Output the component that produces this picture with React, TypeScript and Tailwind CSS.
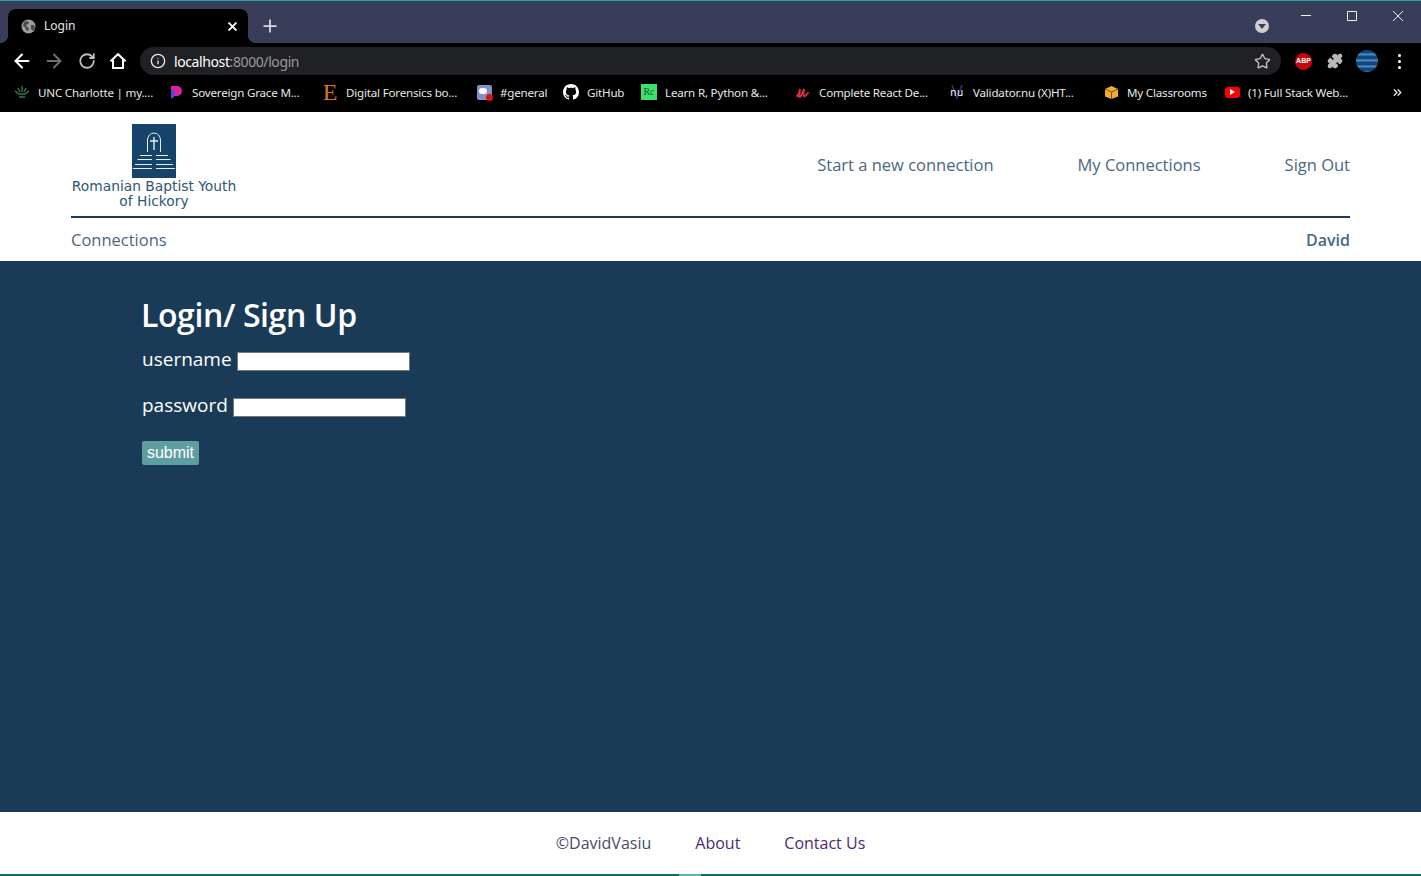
import React from "react";
import { ArrowLeft, ArrowRight, RotateCw, Info, Star, Puzzle, Plus, ChevronsRight } from "lucide-react";

const Bm = ({ icon, label, w }: { icon: React.ReactNode; label: string; w: number }) => (
  <div className="flex items-center shrink-0" style={{ width: w }}>
    <span className="w-4 h-4 flex items-center justify-center shrink-0">{icon}</span>
    <span className="ml-2 text-[11.6px] text-[#e8e8e8] whitespace-nowrap tracking-[-0.2px]">{label}</span>
  </div>
);

export default function App() {
  return (
    <div className="w-[1421px] h-[876px] flex flex-col overflow-hidden bg-white font-['Open_Sans',sans-serif]">
      {/* Tab strip */}
      <div className="h-[43px] shrink-0 bg-[#383d59] border-t border-[#2aa5a8] flex items-end relative pl-2">
        <div className="w-[240px] h-[34px] bg-black rounded-t-lg flex items-center pl-[13px] pr-[11px] relative">
          <span className="absolute left-[-8px] bottom-0 w-2 h-2 bg-[radial-gradient(circle_at_0_0,#383d59_8px,#000_8px)]" />
          <span className="absolute right-[-8px] bottom-0 w-2 h-2 bg-[radial-gradient(circle_at_100%_0,#383d59_8px,#000_8px)]" />
          <svg width="15" height="15" viewBox="0 0 15 15">
            <circle cx="7.5" cy="7.5" r="7" fill="#9c9c9c" />
            <path d="M3 3c2-1 4-1 5 0l-1 2-2 1 1 2 2 1-1 3-2-1-1-3-2-1zM10 6l3 0 1 3-2 3-2-2z" fill="#4a4a4a" />
          </svg>
          <span className="ml-2 text-[12px] text-[#e8e8e8] font-['Noto_Sans',sans-serif]">Login</span>
          <svg width="9" height="9" viewBox="0 0 9 9" stroke="#fff" strokeWidth="1.8" className="ml-auto">
            <path d="M.5.5l8 8M8.5.5l-8 8" />
          </svg>
        </div>
        <Plus size={20} strokeWidth={2.1} className="ml-[12px] mb-[7px] text-[#dcdcdc]" />
        <div className="absolute left-[1255px] top-[18px] w-[14px] h-[14px] rounded-full bg-[#cfcfcf] flex items-center justify-center">
          <div className="w-0 h-0 border-l-[4px] border-r-[4px] border-t-[5px] border-l-transparent border-r-transparent border-t-[#383d59]" />
        </div>
        <div className="absolute right-0 top-0 flex">
          <div className="w-[46px] h-[29px] flex items-center justify-center">
            <svg width="10" height="10" viewBox="0 0 10 10" stroke="#f0f0f0" strokeWidth="1"><path d="M0 4.5h10" /></svg>
          </div>
          <div className="w-[46px] h-[29px] flex items-center justify-center">
            <svg width="10" height="10" viewBox="0 0 10 10" stroke="#f0f0f0" strokeWidth="1" fill="none"><path d="M.5.5h9v9h-9z" /></svg>
          </div>
          <div className="w-[46px] h-[29px] flex items-center justify-center">
            <svg width="10" height="10" viewBox="0 0 10 10" stroke="#f0f0f0" strokeWidth="1"><path d="M0 0l10 10M10 0L0 10" /></svg>
          </div>
        </div>
      </div>
      {/* Toolbar */}
      <div className="h-[37px] shrink-0 bg-black flex items-center pl-[11px] pb-[1px]">
        <ArrowLeft size={22} strokeWidth={2.2} className="text-white shrink-0" />
        <ArrowRight size={22} strokeWidth={2.2} className="ml-[10px] text-[#6f6f6f] shrink-0" />
        <RotateCw size={18} strokeWidth={2.4} className="ml-[13px] text-[#bdbdbd] shrink-0" />
        <svg width="18" height="18" viewBox="0 0 18 18" fill="none" stroke="#fff" strokeWidth="2" className="ml-[13px] shrink-0">
          <path d="M1.5 9.2 9 2.2l7.5 7M4 7.5V16h10V7.5" />
        </svg>
        <div className="ml-[13px] h-[28px] w-[1141px] shrink-0 rounded-full bg-[#202124] flex items-center pl-[10px] pr-[10px]">
          <Info size={16} strokeWidth={2} className="text-[#e8e8e8]" />
          <span className="ml-[8px] text-[14px] text-white tracking-[-0.4px] font-['Noto_Sans',sans-serif]">localhost<span className="text-[#9a9a9a]">:8000/login</span></span>
          <Star size={17} strokeWidth={1.8} className="ml-auto text-[#c8c8c8]" />
        </div>
        <div className="ml-[14px] w-[17px] h-[17px] shrink-0 rounded-full bg-[#c8040e] text-white text-[7px] font-bold flex items-center justify-center font-['Liberation_Sans',sans-serif]">ABP</div>
        <Puzzle size={16} fill="#b8b8b8" className="ml-[15px] text-[#b8b8b8] shrink-0" />
        <div className="ml-[13px] w-[22px] h-[22px] shrink-0 rounded-full bg-[repeating-linear-gradient(180deg,#12457c_0,#12457c_3px,#5a9ac8_4px,#1b5a94_6px)]" />
        <div className="ml-[20px] flex flex-col gap-[3px] shrink-0">
          <span className="w-[3px] h-[3px] rounded-full bg-white" />
          <span className="w-[3px] h-[3px] rounded-full bg-white" />
          <span className="w-[3px] h-[3px] rounded-full bg-white" />
        </div>
      </div>
      {/* Bookmarks */}
      <div className="h-[32px] shrink-0 bg-black flex items-center pl-[14px] pb-[7px] font-['Noto_Sans',sans-serif]">
        <Bm w={154} label="UNC Charlotte | my...." icon={<svg width="16" height="14" viewBox="0 0 16 14" fill="none" stroke="#2e7d43" strokeWidth="1.4"><path d="M8 1v6M4 3l2 4M12 3l-2 4M1 6l4 3h6l4-3M5 12h6" /></svg>} />
        <Bm w={154} label="Sovereign Grace M..." icon={<svg width="14" height="15" viewBox="0 0 14 15"><path d="M2 1h6a5 5 0 0 1 0 10H6l-4 3z" fill="#d6249f" /><path d="M2 5h3v6l-3 3z" fill="#3b4cf0" /></svg>} />
        <Bm w={154} label="Digital Forensics bo..." icon={<span className="text-[24px] leading-none text-[#d9741f] font-['Liberation_Serif',serif]">E</span>} />
        <Bm w={87} label="#general" icon={<span className="relative block w-[15px] h-[15px] rounded-[2px] bg-[#7f93c9]"><span className="absolute left-[2px] top-[3px] w-[8px] h-[6px] rounded-full bg-white" /><span className="absolute right-[-1px] bottom-[-1px] w-[7px] h-[7px] rounded-full bg-[#e0101a]" /></span>} />
        <Bm w={78} label="GitHub" icon={<svg width="16" height="16" viewBox="0 0 16 16" fill="#fff"><path d="M8 0C3.58 0 0 3.58 0 8c0 3.54 2.29 6.53 5.47 7.59.4.07.55-.17.55-.38 0-.19-.01-.82-.01-1.49-2.01.37-2.53-.49-2.69-.94-.09-.23-.48-.94-.82-1.13-.28-.15-.68-.52-.01-.53.63-.01 1.08.58 1.23.82.72 1.21 1.87.87 2.33.66.07-.52.28-.87.51-1.07-1.78-.2-3.64-.89-3.64-3.95 0-.87.31-1.59.82-2.15-.08-.2-.36-1.02.08-2.12 0 0 .67-.21 2.2.82.64-.18 1.32-.27 2-.27s1.36.09 2 .27c1.53-1.04 2.2-.82 2.2-.82.44 1.1.16 1.92.08 2.12.51.56.82 1.27.82 2.15 0 3.07-1.87 3.75-3.65 3.95.29.25.54.73.54 1.48 0 1.07-.01 1.93-.01 2.2 0 .21.15.46.55.38A8.01 8.01 0 0 0 16 8c0-4.42-3.58-8-8-8z" /></svg>} />
        <Bm w={154} label="Learn R, Python &..." icon={<span className="block w-4 h-4 bg-[#3fe06b] text-[#0a5a2a] text-[10px] leading-4 text-center font-['Liberation_Serif',serif]">Rc</span>} />
        <Bm w={154} label="Complete React De..." icon={<svg width="14" height="13" viewBox="0 0 14 13" fill="none" stroke="#c9343f" strokeWidth="2" strokeLinecap="round"><path d="M1 10q2-1 3-7l-1 7q0 2 2 0l3-7q-1 6 0 7t4-3" /></svg>} />
        <Bm w={154} label="Validator.nu (X)HT..." icon={<span className="relative w-4 h-4 flex items-center justify-center"><svg width="16" height="16" viewBox="0 0 16 16" fill="none" stroke="#3a2f6b" strokeWidth="1.6" className="absolute inset-0"><path d="M3 1l5 13 5-13" /></svg><span className="relative text-[10px] leading-none text-white tracking-[0.5px]">nu</span></span>} />
        <Bm w={121} label="My Classrooms" icon={<svg width="15" height="15" viewBox="0 0 15 15"><path d="M7.5 1 14 4v7.5L7.5 14 1 11.5V4z" fill="#f0ad33" /><path d="M1 4l6.5 3L14 4M7.5 7v7" stroke="#7a5212" strokeWidth="1" fill="none" /></svg>} />
        <Bm w={150} label="(1) Full Stack Web..." icon={<span className="flex items-center justify-center w-[15px] h-[11px] rounded-[3px] bg-[#f00]"><span className="w-0 h-0 border-y-[3px] border-l-[5px] border-y-transparent border-l-white" /></span>} />
        <ChevronsRight size={13} strokeWidth={2.5} className="text-[#e8e8e8] ml-[17px]" />
      </div>
      {/* Page header */}
      <header className="h-[149px] shrink-0 bg-white px-[71px]">
        <div className="h-[106px] border-b-2 border-[#1a3b57] flex justify-between">
          <div className="w-[166px] pt-[12px] flex flex-col items-center">
            <div className="w-[44px] h-[54px] bg-[#154369] shrink-0">
              <svg width="44" height="54" viewBox="0 0 44 54" fill="none" stroke="#e6eef4" strokeWidth="1">
                <path d="M15.5 28V16a6.5 7 0 0 1 13 0v12" />
                <path d="M22 13v13M18 17h8" strokeWidth="1.4" />
                <path d="M8 31.5h12M24 31.5h12M5.5 35.5h14.5M24 35.5h14.5M3 40.5h17M24 40.5h17M1 44.5h19M24 44.5h19" />
              </svg>
            </div>
            <div className="text-[13.8px] leading-[15px] mt-[1px] text-[#2f5673] text-center font-['DejaVu_Sans',sans-serif] whitespace-nowrap">Romanian Baptist Youth<br />of Hickory</div>
          </div>
          <nav className="flex gap-[84px] pt-[41px] text-[16.5px] text-[#4a6782] leading-[24px]">
            <span>Start a new connection</span>
            <span>My Connections</span>
            <span>Sign Out</span>
          </nav>
        </div>
        <div className="flex justify-between items-center h-[43px] pt-[1px] text-[16.5px] text-[#4a6782]">
          <span>Connections</span>
          <span className="font-semibold text-[16px]">David</span>
        </div>
      </header>
      {/* Main */}
      <main className="flex-1 bg-[#1a3b57] pl-[142px] pt-[32px] text-white">
        <h1 className="text-[32px] leading-[44px] font-semibold tracking-[-0.4px] ml-[-1px]">Login/ Sign Up</h1>
        <div className="mt-[7px] flex items-center h-[30px]">
          <span className="text-[19px] leading-[26px]">username</span>
          <input className="ml-[5px] mt-[5px] w-[173px] h-[19px] bg-white border border-[#777]" />
        </div>
        <div className="mt-[16px] flex items-center h-[30px]">
          <span className="text-[19px] leading-[26px]">password</span>
          <input className="ml-[5px] mt-[5px] w-[173px] h-[19px] bg-white border border-[#777]" />
        </div>
        <button className="mt-[21px] block w-[57px] h-[24px] rounded-[2px] bg-[#5f9ea0] text-[16px] text-white font-['Liberation_Sans',sans-serif]">submit</button>
      </main>
      {/* Footer */}
      <footer className="h-[64px] shrink-0 bg-white border-b-2 border-[#0f6b66] flex justify-center gap-[44px] pt-[19px] text-[16px] leading-[24px] relative">
        <span className="text-[#4a4a6a]">©DavidVasiu</span>
        <span className="text-[#4b2a75]">About</span>
        <span className="text-[#4b2a75]">Contact Us</span>
        <span className="absolute left-[679px] bottom-[-2px] w-[22px] h-[2px] bg-[#5fb5ac]" />
      </footer>
    </div>
  );
}
